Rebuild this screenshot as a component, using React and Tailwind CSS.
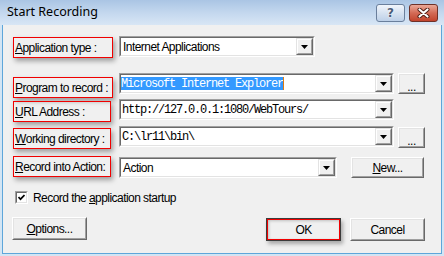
import React from 'react';

const mono = "font-['Liberation_Mono','Courier_New',monospace] text-[12px] tracking-[-1.2px]";

// red annotation box round a label
function LabelBox({ className, children }) {
  return (
    <div className={`h-[21px] border border-[#f00000] shadow-[2px_3px_5px_rgba(0,0,0,0.35)] flex items-center pl-[1px] whitespace-nowrap ${className}`}>
      {children}
    </div>
  );
}

function DropButton() {
  return (
    <div className="w-[17px] h-full shrink-0 border border-t-[#e3e3e3] border-l-[#e3e3e3] border-r-[#696969] border-b-[#696969]">
      <div className="h-full border border-t-white border-l-white border-r-[#a0a0a0] border-b-[#a0a0a0] bg-[#f0f0f0] flex items-center justify-center">
        <svg width="7" height="4" viewBox="0 0 7 4">
          <polygon points="0,0 7,0 3.5,4" fill="#000" />
        </svg>
      </div>
    </div>
  );
}

function Combo({ className, children }) {
  return (
    <div className={`h-[21px] shrink-0 border border-t-[#a0a0a0] border-l-[#a0a0a0] border-r-white border-b-white ${className}`}>
      <div className="h-full flex border border-t-[#696969] border-l-[#696969] border-r-[#e3e3e3] border-b-[#e3e3e3] bg-white">
        <div className="flex-1 flex items-center overflow-hidden whitespace-nowrap">{children}</div>
        <DropButton />
      </div>
    </div>
  );
}

function Btn({ className, children }) {
  return (
    <div className={`shrink-0 border border-t-white border-l-white border-r-[#696969] border-b-[#696969] ${className}`}>
      <div className="h-full border border-t-[#e3e3e3] border-l-[#e3e3e3] border-r-[#a0a0a0] border-b-[#a0a0a0] bg-[#f0f0f0] flex items-center justify-center whitespace-nowrap">
        {children}
      </div>
    </div>
  );
}

export default function App() {
  return (
    <div className="w-[444px] h-[256px] bg-[#d3e5f4] flex flex-col overflow-hidden font-['Liberation_Sans',Arial,sans-serif] text-[12px] tracking-[-0.55px] text-black leading-none select-none">
      {/* --- TITLE BAR --- */}
      <div className="h-[25px] shrink-0 flex items-start bg-gradient-to-b from-[#aac5e4] via-[#c3d7ee] to-[#d8e6f5]">
        <div className="h-full flex items-center pl-[7px] font-['Noto_Sans',sans-serif] text-[12.5px] tracking-normal text-black">
          Start Recording
        </div>
        <div className="ml-auto mt-[4px] mr-[6px] flex gap-[4px]">
          <div className="w-[29px] h-[18px] rounded-[3px] border border-[#6a7f9c] bg-gradient-to-b from-[#f1f5fb] via-[#d6e2f1] to-[#bdd0e8] flex items-center justify-center">
            <span className="font-['DejaVu_Sans',sans-serif] font-bold text-[12px] tracking-normal text-[#4a5c78] [text-shadow:0_0_2px_white,0_0_1px_white]">?</span>
          </div>
          <div className="w-[29px] h-[18px] rounded-[3px] border border-[#6e3128] bg-gradient-to-b from-[#e9a898] via-[#d36a55] to-[#c2432c] flex items-center justify-center">
            <svg width="13" height="10" viewBox="0 0 13 10">
              <path d="M2.5 1.5 L10.5 8.5 M10.5 1.5 L2.5 8.5" stroke="#4a1a12" strokeWidth="4" strokeLinecap="round" />
              <path d="M2.5 1.5 L10.5 8.5 M10.5 1.5 L2.5 8.5" stroke="#fff" strokeWidth="2.2" strokeLinecap="round" />
            </svg>
          </div>
        </div>
      </div>

      {/* --- DIALOG BODY --- */}
      <div className="flex-1 mx-[2px] mb-[2px] border-x border-b border-[#5ea6da] bg-[#f0f0f0] pl-[10px] flex flex-col">
        <div className="mt-[11px] h-[22px] flex items-start">
          <div className="w-[106px] shrink-0 pt-[1px]">
            <LabelBox className="w-[100px]"><u>A</u>pplication type :</LabelBox>
          </div>
          <Combo className="w-[196px]">
            <span className="pl-[2px]">Internet Applications</span>
          </Combo>
        </div>

        <div className="mt-[15px] h-[25px] flex items-start">
          <div className="w-[106px] shrink-0 pt-[4px]">
            <LabelBox className="w-[100px]"><u>P</u>rogram to record :</LabelBox>
          </div>
          <Combo className="w-[275px]">
            <span className={`${mono} bg-[#3399ff] text-white h-[13px] flex items-center`}>Microsoft Internet Explorer</span>
            <span className="w-[1px] h-[13px] bg-[#e07a10]" />
          </Combo>
          <Btn className="ml-[4px] w-[27px] h-[21px]">
            <span className="pt-[6px]">...</span>
          </Btn>
        </div>

        <div className="mt-[1px] h-[23px] flex items-start">
          <div className="w-[106px] shrink-0 pt-[2px]">
            <LabelBox className="w-[98px]"><u>U</u>RL Address :</LabelBox>
          </div>
          <Combo className="w-[275px]">
            <span className={`${mono} pl-[1px]`}>http://127.0.0.1:1080/WebTours/</span>
          </Combo>
        </div>

        <div className="mt-[4px] h-[22px] flex items-start">
          <div className="w-[106px] shrink-0 pt-[2px]">
            <LabelBox className="w-[98px]"><u>W</u>orking directory :</LabelBox>
          </div>
          <Combo className="w-[275px]">
            <span className={`${mono} pl-[1px]`}>C:\lr11\bin\</span>
          </Combo>
          <Btn className="ml-[4px] mt-[1px] w-[27px] h-[21px]">
            <span className="pt-[6px]">...</span>
          </Btn>
        </div>

        <div className="mt-[8px] h-[22px] flex items-start">
          <div className="w-[106px] shrink-0">
            <LabelBox className="w-[98px]"><u>R</u>ecord into Action:</LabelBox>
          </div>
          <Combo className="mt-[1px] w-[218px]">
            <span className="pl-[2px]">Action</span>
          </Combo>
          <Btn className="ml-[14px] mt-[1px] w-[73px] h-[21px]">
            <span><u>N</u>ew...</span>
          </Btn>
        </div>

        {/* --- CHECKBOX --- */}
        <div className="mt-[13px] h-[13px] flex items-center">
          <div className="ml-[2px] w-[13px] h-[13px] shrink-0 border border-t-[#a0a0a0] border-l-[#a0a0a0] border-r-white border-b-white">
            <div className="h-full border border-t-[#696969] border-l-[#696969] border-r-[#e3e3e3] border-b-[#e3e3e3] bg-white flex items-center justify-center">
              <svg width="7" height="7" viewBox="0 0 7 7">
                <polyline points="0.5,3 2.5,5.2 6.5,1" fill="none" stroke="#000" strokeWidth="1.7" />
              </svg>
            </div>
          </div>
          <span className="ml-[5px] whitespace-nowrap">Record the <u>a</u>pplication startup</span>
        </div>

        {/* --- BOTTOM BUTTONS --- */}
        <div className="mt-[13px] h-[24px] flex items-start">
          <Btn className="-ml-[1px] w-[75px] h-[23px]">
            <span><u>O</u>ptions...</span>
          </Btn>
          <div className="ml-[179px] mt-[1px] w-[75px] h-[23px] border border-[#3b3b3b] shadow-[2px_3px_4px_rgba(0,0,0,0.3)]">
            <div className="h-full border border-[#f00000] bg-[#f0f0f0] shadow-[inset_1px_1px_3px_rgba(0,0,0,0.2)] flex items-center justify-center">
              OK
            </div>
          </div>
          <Btn className="ml-[9px] mt-[1px] w-[75px] h-[23px]">
            <span>Cancel</span>
          </Btn>
        </div>
      </div>
    </div>
  );
}
